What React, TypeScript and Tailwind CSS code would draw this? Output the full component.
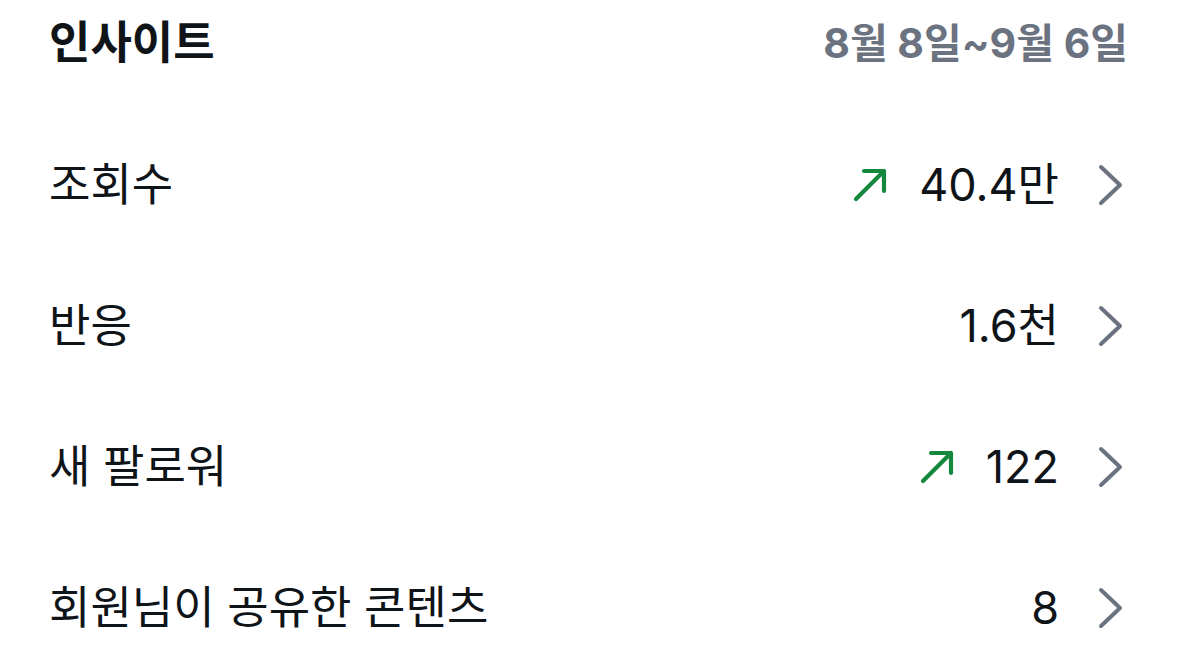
type Row = { label: string; value: string; up?: boolean };

const rows: Row[] = [
  { label: "조회수", value: "40.4만", up: true },
  { label: "반응", value: "1.6천" },
  { label: "새 팔로워", value: "122", up: true },
  { label: "회원님이 공유한 콘텐츠", value: "8" },
];

function TrendUp() {
  return (
    <svg width="36" height="36" viewBox="0 0 36 36" fill="none" className="mr-[31px] text-[#16883e]">
      <path
        d="M4 32 L32 4 M12 4 H32 V24"
        stroke="currentColor"
        strokeWidth="4.2"
        strokeLinecap="round"
        strokeLinejoin="round"
      />
    </svg>
  );
}

function Chevron() {
  return (
    <svg width="28" height="44" viewBox="0 0 28 44" fill="none" className="ml-[38px] text-[#6b7280]">
      <path
        d="M4 4 L23 22 L4 40"
        stroke="currentColor"
        strokeWidth="4"
        strokeLinecap="round"
        strokeLinejoin="round"
      />
    </svg>
  );
}

export default function App() {
  return (
    <div
      className="w-[1179px] h-[670px] overflow-hidden bg-white pl-[49px] pr-[51px] text-[#0f1419]"
      style={{ fontFamily: 'Inter, "Noto Sans CJK KR", sans-serif' }}
    >
      {/* Header */}
      <div className="flex h-[114px] items-start justify-between pt-[18px]">
        <h1 className="text-[45px] font-bold leading-[50px]">인사이트</h1>
        <span className="text-[41px] font-bold leading-[50px] text-[#6b7280]">
          8월 8일~9월 6일
        </span>
      </div>

      {/* Rows */}
      {rows.map((row) => (
        <div key={row.label} className="flex h-[141px] items-center justify-between">
          <span className="text-[45px] leading-none">{row.label}</span>
          <div className="flex items-center pr-[3px]">
            {row.up && <TrendUp />}
            <span className="text-[45px] leading-none">{row.value}</span>
            <Chevron />
          </div>
        </div>
      ))}
    </div>
  );
}
